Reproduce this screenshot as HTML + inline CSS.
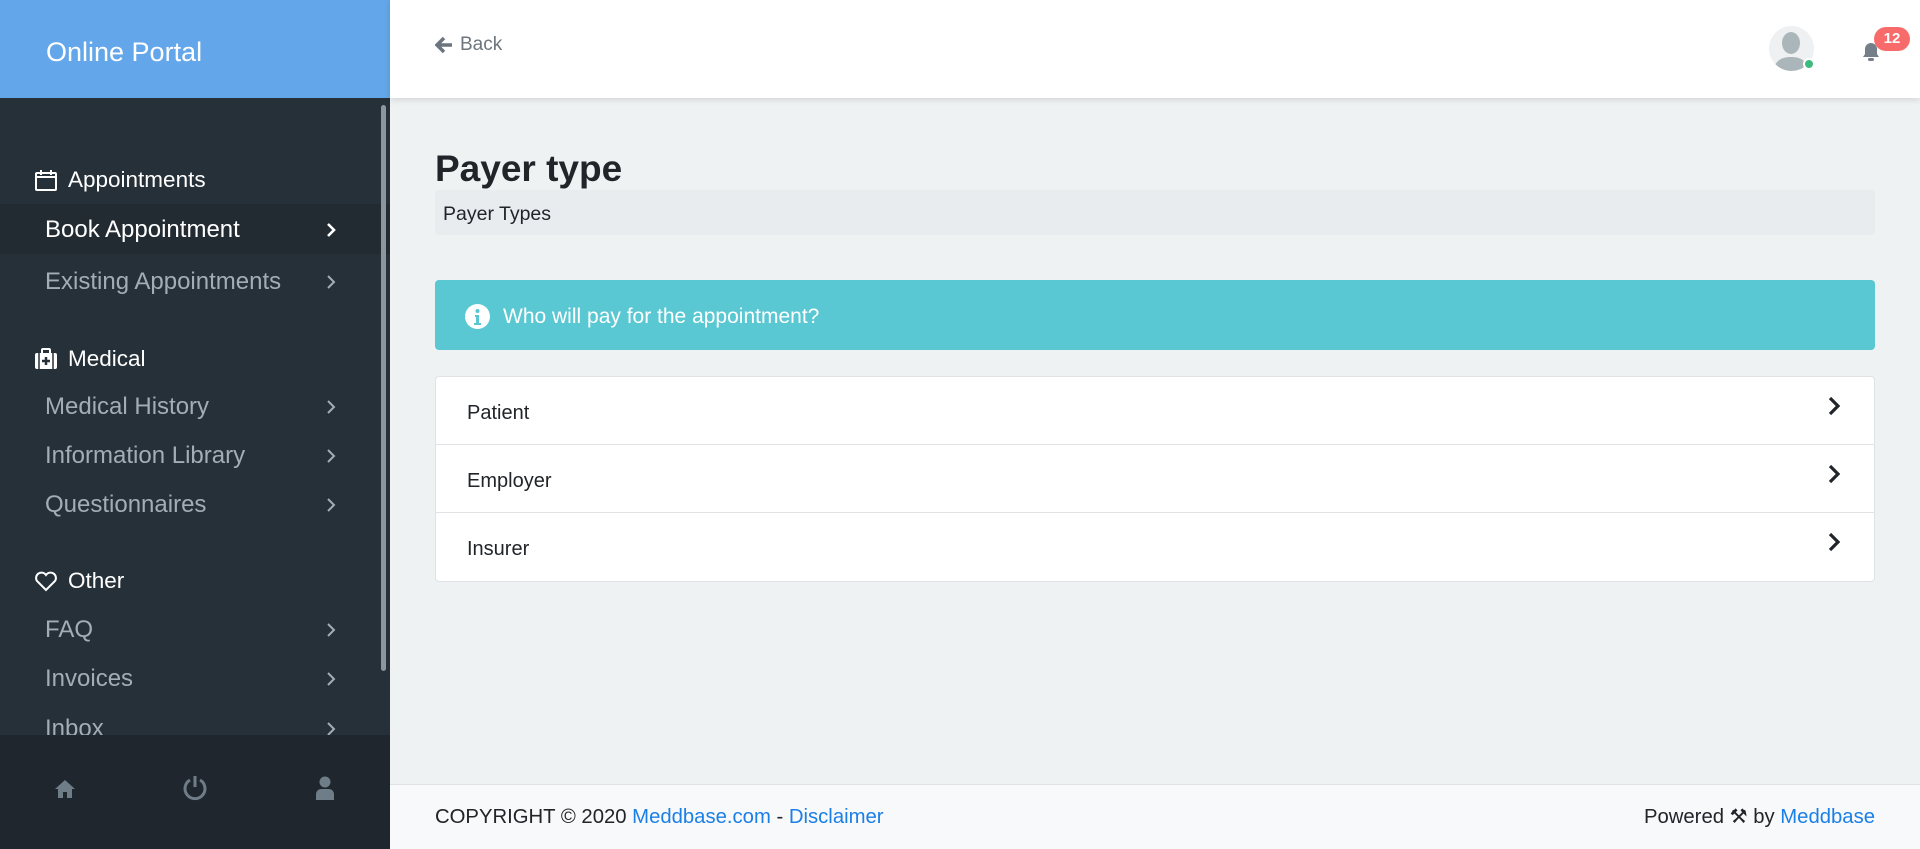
<!DOCTYPE html>
<html><head><meta charset="utf-8"><style>
*{box-sizing:border-box;margin:0;padding:0}
body{width:1920px;height:849px;overflow:hidden;font-family:"Liberation Sans",sans-serif;background:#eff2f3;position:relative}
.sb{position:absolute;left:0;top:0;width:390px;height:849px;background:#263038}
.brand{height:98px;background:#63a6e9;color:#fff;font-size:27px;padding-left:46px;line-height:104px}
.sec{position:absolute;left:34px;color:#fff;font-size:22.5px;display:flex;align-items:center}
.sec svg{margin-right:10px}
.it{position:absolute;left:0;width:390px;height:50px;color:#a2adb6;font-size:24px;padding-left:45px;line-height:52px}
.it.act{background:#222b32;color:#fff}
.it .ch{position:absolute;left:326px;top:18px}
.scroll{position:absolute;left:381px;top:105px;width:5px;height:566px;background:#8d969c;border-radius:3px;z-index:2}
.bot{position:absolute;left:0;top:735px;width:390px;height:114px;background:#20262d;z-index:3}
.hdr{position:absolute;left:390px;top:0;right:0;height:98px;background:#fff;box-shadow:0 2px 6px rgba(0,0,0,.12)}
.back{position:absolute;left:45px;top:34px;color:#6c757d;font-size:19px;display:flex;align-items:center}
h1{position:absolute;left:435px;top:148px;font-size:37px;font-weight:bold;color:#212529}
.bc{position:absolute;left:435px;top:190px;width:1440px;height:45px;background:#e9ecef;border-radius:4px;font-size:19.5px;color:#212529;padding-left:8px;line-height:48px}
.al{position:absolute;left:435px;top:280px;width:1440px;height:70px;background:#5ac8d3;border-radius:4px;color:#fff;font-size:21px;line-height:74px;padding-left:68px}
.list{position:absolute;left:435px;top:376px;width:1440px;background:#fff;border:1px solid #dfe3e6;border-radius:4px}
.row{height:68px;border-bottom:1px solid #dfe3e6;position:relative;font-size:20px;color:#212529;line-height:72px;padding-left:31px}
.row:last-child{border-bottom:none}
.row svg{position:absolute;right:34px;top:19px}
.ft{position:absolute;left:390px;top:784px;right:0;height:65px;background:#f8f9fa;border-top:1px solid #dee2e6;font-size:20.3px;color:#212529;line-height:64px}
.ft a{color:#1a7fe6;text-decoration:none}
</style></head><body>
<div class="sb">
<div class="brand">Online Portal</div>
<div class="scroll"></div>
<div class="sec" style="top:167px"><svg width="24" height="24" viewBox="0 0 24 24" fill="none" stroke="#fff" stroke-width="2"><rect x="2" y="5" width="20" height="17" rx="1"/><path d="M2 9h20M7 2v5M17 2v5"/></svg>Appointments</div>
<div class="it act" style="top:204px">Book Appointment<svg class="ch" width="10" height="16" viewBox="0 0 10 16"><path d="M2 2l6 6-6 6" stroke="#fff" stroke-width="2.6" fill="none"/></svg></div>
<div class="it" style="top:256px">Existing Appointments<svg class="ch" width="10" height="16" viewBox="0 0 10 16"><path d="M2 2l6 6-6 6" stroke="#a2adb6" stroke-width="2" fill="none"/></svg></div>
<div class="sec" style="top:346px"><svg width="24" height="22" viewBox="0 0 24 22"><rect x="1" y="5" width="22" height="16" rx="2" fill="#fff"/><rect x="8" y="1" width="8" height="5" rx="1" fill="none" stroke="#fff" stroke-width="2"/><path d="M12 9v8M8 13h8" stroke="#263038" stroke-width="2.5"/><path d="M5 5v16M19 5v16" stroke="#263038" stroke-width="1.5"/></svg>Medical</div>
<div class="it" style="top:381px">Medical History<svg class="ch" width="10" height="16" viewBox="0 0 10 16"><path d="M2 2l6 6-6 6" stroke="#a2adb6" stroke-width="2" fill="none"/></svg></div>
<div class="it" style="top:430px">Information Library<svg class="ch" width="10" height="16" viewBox="0 0 10 16"><path d="M2 2l6 6-6 6" stroke="#a2adb6" stroke-width="2" fill="none"/></svg></div>
<div class="it" style="top:479px">Questionnaires<svg class="ch" width="10" height="16" viewBox="0 0 10 16"><path d="M2 2l6 6-6 6" stroke="#a2adb6" stroke-width="2" fill="none"/></svg></div>
<div class="sec" style="top:568px"><svg width="24" height="22" viewBox="0 0 24 22"><path d="M12 20L3 11a5 5 0 0 1 9-6 5 5 0 0 1 9 6z" fill="none" stroke="#fff" stroke-width="2"/></svg>Other</div>
<div class="it" style="top:604px">FAQ<svg class="ch" width="10" height="16" viewBox="0 0 10 16"><path d="M2 2l6 6-6 6" stroke="#a2adb6" stroke-width="2" fill="none"/></svg></div>
<div class="it" style="top:653px">Invoices<svg class="ch" width="10" height="16" viewBox="0 0 10 16"><path d="M2 2l6 6-6 6" stroke="#a2adb6" stroke-width="2" fill="none"/></svg></div>
<div class="it" style="top:703px">Inbox<svg class="ch" width="10" height="16" viewBox="0 0 10 16"><path d="M2 2l6 6-6 6" stroke="#a2adb6" stroke-width="2" fill="none"/></svg></div>
<div class="bot">
<svg style="position:absolute;left:54px;top:44px" width="22" height="20" viewBox="0 0 22 20"><path d="M11 1L1 10h3v9h5v-6h4v6h5v-9h3z" fill="#6f7d88"/></svg>
<svg style="position:absolute;left:182px;top:40px" width="26" height="26" viewBox="0 0 26 26" fill="none" stroke="#6f7d88" stroke-width="3"><path d="M8 5a10 10 0 1 0 10 0"/><path d="M13 1v11"/></svg>
<svg style="position:absolute;left:316px;top:41px" width="18" height="24" viewBox="0 0 18 24" fill="#6f7d88"><circle cx="9" cy="6" r="5.5"/><path d="M0 24v-6a5 5 0 0 1 5-5h8a5 5 0 0 1 5 5v6z"/></svg>
</div>
</div>
<div class="hdr">
<div class="back"><svg width="18" height="18" viewBox="0 0 18 18" style="margin-right:7px"><path d="M9 2L2 9l7 7M2 9h15" stroke="#6c757d" stroke-width="3.5" fill="none"/></svg>Back</div>
<div style="position:absolute;left:1379px;top:26px;width:45px;height:45px;border-radius:50%;background:#eef0f1;overflow:hidden"><svg width="45" height="45" viewBox="0 0 45 45"><ellipse cx="22" cy="17" rx="9" ry="11" fill="#abb6ba"/><path d="M4 45c2-10 8-14 18-14s16 4 18 14z" fill="#abb6ba"/></svg></div>
<div style="position:absolute;left:1413px;top:58px;width:12px;height:12px;border-radius:50%;background:#3dbb7d;border:2px solid #fff"></div>
<svg style="position:absolute;left:1472px;top:42px" width="18" height="20" viewBox="0 0 18 20"><path d="M9 1a6 6 0 0 0-6 6v5l-2 3h16l-2-3V7a6 6 0 0 0-6-6z" fill="#757f89"/><rect x="6" y="16" width="6" height="3" rx="1.5" fill="#757f89"/></svg>
<div style="position:absolute;left:1484px;top:27px;width:36px;height:24px;border-radius:12px;background:#f86b6b;color:#fff;font-size:15px;font-weight:bold;text-align:center;line-height:24px">12</div>
</div>
<h1>Payer type</h1>
<div class="bc">Payer Types</div>
<div class="al"><svg style="position:absolute;left:30px;top:24px" width="25" height="25" viewBox="0 0 25 25"><circle cx="12.5" cy="12.5" r="12.5" fill="#fff"/><circle cx="12.5" cy="7" r="2" fill="#5ac8d3"/><path d="M10 11h4v8h2v2H9v-2h2v-6h-1z" fill="#5ac8d3"/></svg>Who will pay for the appointment?</div>
<div class="list">
<div class="row">Patient<svg width="12" height="20" viewBox="0 0 12 20"><path d="M2 2l8 8-8 8" stroke="#212529" stroke-width="3.2" fill="none"/></svg></div>
<div class="row">Employer<svg width="12" height="20" viewBox="0 0 12 20"><path d="M2 2l8 8-8 8" stroke="#212529" stroke-width="3.2" fill="none"/></svg></div>
<div class="row">Insurer<svg width="12" height="20" viewBox="0 0 12 20"><path d="M2 2l8 8-8 8" stroke="#212529" stroke-width="3.2" fill="none"/></svg></div>
</div>
<div class="ft"><span style="position:absolute;left:45px">COPYRIGHT © 2020 <a>Meddbase.com</a> - <a>Disclaimer</a></span><span style="position:absolute;right:45px">Powered <span style="font-size:20px">⚒</span> by <a>Meddbase</a></span></div>
</body></html>
